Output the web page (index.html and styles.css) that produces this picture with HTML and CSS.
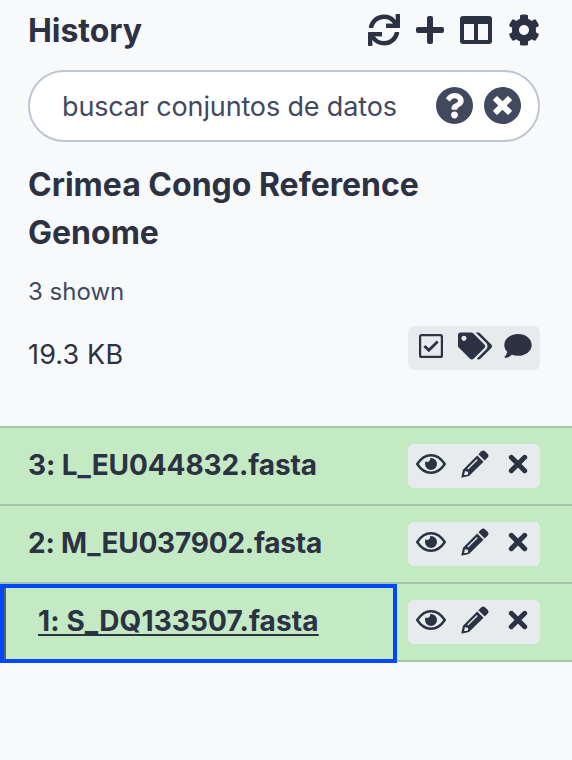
FILE: index.html
```html
<!DOCTYPE html>
<html lang="es">
<head>
<meta charset="utf-8">
<title>History</title>
<link rel="stylesheet" href="styles.css">
</head>
<body>
<svg class="defs" aria-hidden="true">
  <symbol id="eye" viewBox="0 0 30 20"><path d="M1.2 10Q7 1.2 15 1.2T28.8 10Q23 18.8 15 18.8T1.2 10Z" fill="none" stroke="currentColor" stroke-width="2.4" stroke-linejoin="round"/><path d="M15 4a6 6 0 1 1-6 6c0-1 .2-1.9.6-2.7A3 3 0 0 0 14.2 4.1Z"/></symbol>
  <symbol id="pencil" viewBox="0 0 28 28"><path fill-rule="evenodd" d="M16.2 5.5 22.5 11.8 8 26 1.2 27.6Q.2 27.7.4 26.7L2 19.7ZM4 21 3 24.9 5.1 25.1 7.1 24.5 7 21.8 4.3 21.2ZM6.3 18.6 7.2 19.4 16.8 9.9 15.9 9Z"/><path d="m17.4 4.3 3-3Q22.4-.4 24.2 1.4L26.6 3.8Q28.3 5.7 26.7 7.5L23.7 10.6Z"/></symbol>
  <symbol id="times" viewBox="0 0 20 20"><path d="m3.3 3.3 13.4 13.4M16.7 3.3 3.3 16.7" fill="none" stroke="currentColor" stroke-width="5" stroke-linecap="round"/></symbol>
</svg>
<main class="panel">
  <header class="header">
    <h1 class="title">History</h1>
    <div class="header-actions">
      <svg class="i32" viewBox="0 0 512 512"><path d="M440.65 12.57l4 82.77A247.16 247.16 0 0 0 255.83 8C134.73 8 33.91 94.92 12.29 209.82A12 12 0 0 0 24.09 224h49.05a12 12 0 0 0 11.67-9.26 175.91 175.91 0 0 1 317-56.94l-101.46-4.86a12 12 0 0 0-12.57 12v47.41a12 12 0 0 0 12 12H500a12 12 0 0 0 12-12V12a12 12 0 0 0-12-12h-47.37a12 12 0 0 0-11.98 12.57zM255.83 432a175.61 175.61 0 0 1-146-77.8l101.8 4.87a12 12 0 0 0 12.57-12v-47.4a12 12 0 0 0-12-12H12a12 12 0 0 0-12 12V500a12 12 0 0 0 12 12h47.35a12 12 0 0 0 12-12.6l-4.15-82.57A247.17 247.17 0 0 0 255.83 504c121.11 0 221.93-86.92 243.55-201.82a12 12 0 0 0-11.8-14.18h-49.05a12 12 0 0 0-11.67 9.26A175.86 175.86 0 0 1 255.83 432z"/></svg>
      <svg class="i28" viewBox="0 0 28 28"><path d="M13 0h2q2 0 2 2v9h9q2 0 2 2v2q0 2-2 2h-9v9q0 2-2 2h-2q-2 0-2-2v-9H2q-2 0-2-2v-2q0-2 2-2h9V2q0-2 2-2Z"/></svg>
      <svg class="i32" viewBox="0 0 32 32"><path fill-rule="evenodd" d="M3 2h26a3 3 0 0 1 3 3v22a3 3 0 0 1-3 3H3a3 3 0 0 1-3-3V5a3 3 0 0 1 3-3ZM4 10v16h10V10ZM18 10v16h10V10Z"/></svg>
      <svg class="i32" viewBox="0 0 512 512"><path d="M487.4 315.7l-42.6-24.6c4.3-23.2 4.3-47 0-70.2l42.6-24.6c4.9-2.8 7.1-8.6 5.5-14-11.1-35.6-30-67.8-54.7-94.6-3.8-4.1-10-5.1-14.8-2.3L380.8 110c-17.9-15.4-38.5-27.3-60.8-35.1V25.8c0-5.6-3.9-10.5-9.4-11.7-36.7-8.2-74.3-7.8-109.2 0-5.5 1.2-9.4 6.1-9.4 11.7V75c-22.2 7.9-42.8 19.8-60.8 35.1L88.7 85.5c-4.9-2.8-11-1.9-14.8 2.3-24.7 26.7-43.6 58.9-54.7 94.6-1.7 5.4.6 11.2 5.5 14L67.3 221c-4.3 23.2-4.3 47 0 70.2l-42.6 24.6c-4.9 2.8-7.1 8.6-5.5 14 11.1 35.6 30 67.8 54.7 94.6 3.8 4.1 10 5.1 14.8 2.3l42.6-24.6c17.9 15.4 38.5 27.3 60.8 35.1v49.2c0 5.6 3.9 10.5 9.4 11.7 36.7 8.2 74.3 7.8 109.2 0 5.5-1.2 9.4-6.1 9.4-11.7v-49.2c22.2-7.9 42.8-19.8 60.8-35.1l42.6 24.6c4.9 2.8 11 1.9 14.8-2.3 24.7-26.7 43.6-58.9 54.7-94.6 1.5-5.5-.7-11.3-5.6-14.1zM256 336c-44.1 0-80-35.9-80-80s35.9-80 80-80 80 35.9 80 80-35.9 80-80 80z"/></svg>
    </div>
  </header>
  <div class="search">
    <span class="search-text">buscar conjuntos de datos</span>
    <div class="search-actions">
      <svg class="i37" viewBox="8 8 496 496"><path d="M504 256c0 136.997-111.043 248-248 248S8 392.997 8 256C8 119.083 119.043 8 256 8s248 111.083 248 248zM262.655 90c-54.497 0-89.255 22.957-116.549 63.758-3.536 5.286-2.353 12.415 2.715 16.258l34.699 26.31c5.205 3.947 12.621 3.008 16.665-2.122 17.864-22.658 30.113-35.797 57.303-35.797 20.429 0 45.698 13.148 45.698 32.958 0 14.976-12.363 22.667-32.534 33.976C247.128 238.528 216 254.941 216 296v4c0 6.627 5.373 12 12 12h56c6.627 0 12-5.373 12-12v-1.333c0-28.462 83.186-29.647 83.186-106.667 0-58.002-60.165-102-116.531-102zM256 338c-25.365 0-46 20.635-46 46 0 25.364 20.635 46 46 46s46-20.636 46-46c0-25.365-20.635-46-46-46z"/></svg>
      <svg class="i37" viewBox="8 8 496 496"><path d="M256 8C119 8 8 119 8 256s111 248 248 248 248-111 248-248S393 8 256 8zm121.6 313.1c4.7 4.7 4.7 12.3 0 17L338 377.6c-4.7 4.7-12.3 4.7-17 0L256 312l-65.1 65.6c-4.7 4.7-12.3 4.7-17 0L134.4 338c-4.7-4.7-4.7-12.3 0-17l65.6-65-65.6-65.1c-4.7-4.7-4.7-12.3 0-17l39.6-39.6c4.7-4.7 12.3-4.7 17 0l65 65.7 65.1-65.6c4.7-4.7 12.3-4.7 17 0l39.6 39.6c4.7 4.7 4.7 12.3 0 17L312 256l65.6 65.1z"/></svg>
    </div>
  </div>
  <h2 class="name">Crimea Congo Reference Genome</h2>
  <p class="shown">3 shown</p>
  <div class="meta">
    <span class="size">19.3 KB</span>
    <div class="tools meta-tools">
      <svg class="check" viewBox="0 0 24 24"><rect x="1.1" y="1.1" width="21.8" height="21.8" rx="1.5" fill="none" stroke="currentColor" stroke-width="2.2"/><path d="m5.4 12 4.4 4.3 8.9-8.9" fill="none" stroke="currentColor" stroke-width="2.8"/></svg>
      <svg class="tags" viewBox="0 0 640 512"><path d="M497.941 225.941L286.059 14.059A48 48 0 0 0 252.118 0H48C21.49 0 0 21.49 0 48v204.118a48 48 0 0 0 14.059 33.941l211.882 211.882c18.744 18.745 49.136 18.746 67.882 0l204.118-204.118c18.745-18.745 18.745-49.137 0-67.882zM112 160c-26.51 0-48-21.49-48-48s21.49-48 48-48 48 21.49 48 48-21.49 48-48 48zm513.941 133.823L421.823 497.941c-18.745 18.745-49.137 18.745-67.882 0l-.36-.36L527.64 323.522c16.999-16.999 26.36-39.6 26.36-63.64s-9.362-46.641-26.36-63.64L331.397 0h48.721a48 48 0 0 1 33.941 14.059l211.882 211.882c18.745 18.745 18.745 49.137 0 67.882z"/></svg>
      <svg class="comment" viewBox="0 0 28 24"><path d="M14 0c7.7 0 13.7 4.9 13.7 10.9S21.7 21.8 14 21.8c-2.2 0-4.3-.4-6.1-1.1C6 22.5 3.4 23.7.9 23.7c-.5 0-.7-.5-.3-.9 1.2-1.3 2.4-3.2 2.7-5C1.5 15.9.3 13.5.3 10.9.3 4.9 6.3 0 14 0Z"/></svg>
    </div>
  </div>
</main>
<ul class="list">
  <li class="row"><a class="label l3">3: L_EU044832.fasta</a><div class="tools"><svg class="eye"><use href="#eye"/></svg><svg class="pencil"><use href="#pencil"/></svg><svg class="times"><use href="#times"/></svg></div></li>
  <li class="row"><a class="label l2">2: M_EU037902.fasta</a><div class="tools"><svg class="eye"><use href="#eye"/></svg><svg class="pencil"><use href="#pencil"/></svg><svg class="times"><use href="#times"/></svg></div></li>
  <li class="row focused"><a class="label l1">1: S_DQ133507.fasta</a><div class="tools"><svg class="eye"><use href="#eye"/></svg><svg class="pencil"><use href="#pencil"/></svg><svg class="times"><use href="#times"/></svg></div></li>
</ul>
</body>
</html>
```
FILE: styles.css
```css
*, *::after { box-sizing: border-box; }
body {
  margin: 0;
  height: 760px;
  overflow: hidden;
  background: #f8f9fb;
  color: #2c3143;
  font-family: Inter, "Liberation Sans", sans-serif;
}
svg { display: block; flex: none; fill: currentColor; }
.defs { position: absolute; width: 0; height: 0; }
.panel { height: 426px; padding: 7px 32px 0 28px; }
.header { display: flex; justify-content: space-between; height: 63px; }
.title { margin: 0; font-size: 32px; line-height: 48px; font-weight: 700; letter-spacing: -0.05px; }
.header-actions { display: flex; gap: 16px; align-items: center; height: 46px; }
.i32 { width: 32px; height: 32px; }
.i28 { width: 28px; height: 28px; }
.i37 { width: 37px; height: 37px; }
.search {
  display: flex;
  justify-content: space-between;
  align-items: center;
  height: 72px;
  padding: 0 17px 0 32px;
  border: 2px solid #bdc6d1;
  border-radius: 36px;
  background: #fff;
  color: #41495f;
}
.search-text { padding-top: 1px; font-size: 27px; line-height: 40px; letter-spacing: -0.15px; white-space: nowrap; }
.search-actions { display: flex; gap: 11px; margin-bottom: 1px; }
.name { margin: 19px 0 0; font-size: 32px; line-height: 48px; font-weight: 700; letter-spacing: 0; }
.shown { margin: 16px 0 0; font-size: 24px; line-height: 38px; color: #41495f; }
.meta { display: flex; justify-content: space-between; margin-top: 15px; }
.size { margin-top: 9px; font-size: 27px; line-height: 40px; letter-spacing: 0.15px; }
.tools {
  display: flex;
  align-items: center;
  width: 132px;
  height: 44px;
  padding-left: 8px;
  border-radius: 6px;
  background: #e8ebee;
}
.meta-tools { padding: 0 0 4px 11px; }
.check { width: 24px; height: 24px; }
.tags { width: 34px; height: 28px; margin-left: 15px; }
.comment { width: 28px; height: 24px; margin-left: 12px; }
.eye { width: 30px; height: 20px; margin-bottom: 4px; }
.pencil { width: 28px; height: 28px; margin: 0 0 4px 15px; }
.times { width: 20px; height: 20px; margin: 0 0 4px 19px; }
.list { margin: 0; padding: 0; list-style: none; border-bottom: 2px solid #a3c5a8; }
.row {
  position: relative;
  display: flex;
  justify-content: space-between;
  height: 78px;
  padding: 16px 32px 0 28px;
  border-top: 2px solid #a3c5a8;
  background: #c4eac3;
}
.label { padding-top: 1px; font-size: 28px; line-height: 40px; font-weight: 700; letter-spacing: -0.1px; white-space: nowrap; }
.l2 { letter-spacing: -0.22px; }
.focused { padding-left: 38px; }
.focused::after {
  content: "";
  position: absolute;
  top: 0;
  left: 0;
  width: 397px;
  height: 79px;
  border: 4px solid #0048ff;
  box-shadow: inset 2px 0 #536078;
}
.l1 { letter-spacing: 0.12px; text-decoration: underline; text-decoration-thickness: 2px; text-underline-offset: 3px; text-decoration-skip-ink: none; }
```
